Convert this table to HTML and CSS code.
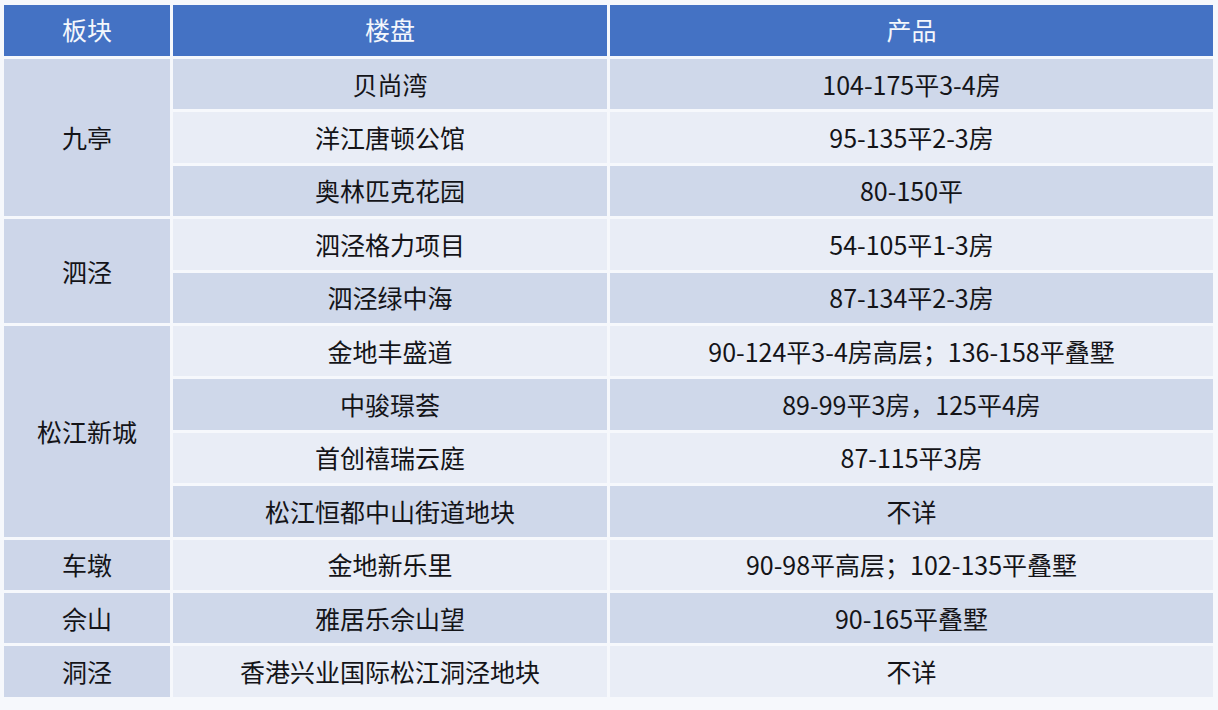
FILE: index.html
```html
<!DOCTYPE html>
<html lang="zh">
<head>
<meta charset="utf-8">
<link rel="stylesheet" href="styles.css">
</head>
<body>
<table class="grid">
  <colgroup>
    <col class="c1"><col class="c2"><col class="c3">
  </colgroup>
  <thead>
    <tr class="head"><th>板块</th><th>楼盘</th><th>产品</th></tr>
  </thead>
  <tbody>
    <tr class="odd"><td class="area" rowspan="3">九亭</td><td>贝尚湾</td><td>104-175平3-4房</td></tr>
    <tr class="even"><td>洋江唐顿公馆</td><td>95-135平2-3房</td></tr>
    <tr class="odd"><td>奥林匹克花园</td><td>80-150平</td></tr>
    <tr class="even"><td class="area" rowspan="2">泗泾</td><td>泗泾格力项目</td><td>54-105平1-3房</td></tr>
    <tr class="odd"><td>泗泾绿中海</td><td>87-134平2-3房</td></tr>
    <tr class="even"><td class="area" rowspan="4">松江新城</td><td>金地丰盛道</td><td>90-124平3-4房高层；136-158平叠墅</td></tr>
    <tr class="odd"><td>中骏璟荟</td><td>89-99平3房，125平4房</td></tr>
    <tr class="even"><td>首创禧瑞云庭</td><td>87-115平3房</td></tr>
    <tr class="odd"><td>松江恒都中山街道地块</td><td>不详</td></tr>
    <tr class="even"><td class="area">车墩</td><td>金地新乐里</td><td>90-98平高层；102-135平叠墅</td></tr>
    <tr class="odd"><td class="area">佘山</td><td>雅居乐佘山望</td><td>90-165平叠墅</td></tr>
    <tr class="even"><td class="area">洞泾</td><td>香港兴业国际松江洞泾地块</td><td>不详</td></tr>
  </tbody>
</table>
</body>
</html>
```

FILE: styles.css
```css
html, body {
  margin: 0;
  padding: 0;
  background: #f6f8fc;
}
body {
  padding: 2px 0 0 1px;
  font-family: "Noto Sans CJK SC", "Noto Sans", sans-serif;
  color: #141418;
}
.grid {
  border-collapse: separate;
  border-spacing: 3px;
  table-layout: fixed;
  width: 1215px;
}
.c1 { width: 166px; }
.c2 { width: 434px; }
.c3 { width: 603px; }
th, td {
  padding: 0;
  text-align: center;
  vertical-align: middle;
  font-size: 25px;
  font-weight: 400;
  line-height: 1;
}
.head th {
  height: 51px;
  padding-bottom: 3px;
  box-sizing: border-box;
  background: #4472c4;
  color: #f4f7fc;
}
tbody tr { height: 50.4px; }
.odd td { background: #cfd8ea; }
.even td { background: #e9edf6; }
td.area { background: #cdd6e9; }
```
